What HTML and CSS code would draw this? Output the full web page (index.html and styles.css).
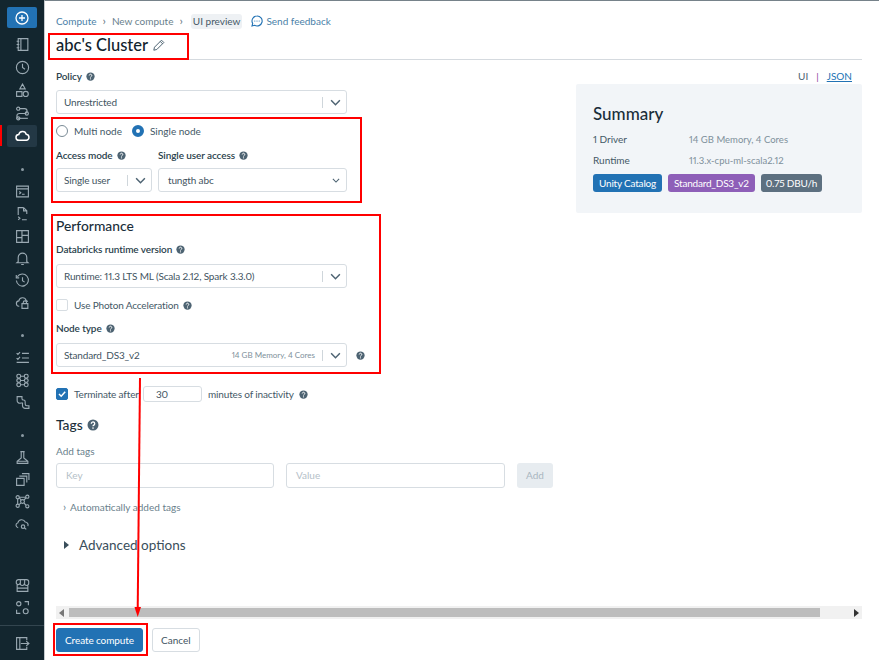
FILE: index.html
```html
<!DOCTYPE html>
<html lang="en">
<head>
<meta charset="utf-8">
<title>abc's Cluster</title>
<link rel="stylesheet" href="styles.css">
</head>
<body>
<svg class="defs" width="0" height="0" aria-hidden="true">
  <symbol id="help" viewBox="0 0 12 12"><circle cx="6" cy="6" r="5.5" fill="#4d6372"/><path d="M4.3 4.7a1.7 1.7 0 1 1 2.6 1.4c-.6.4-.9.6-.9 1.2" fill="none" stroke="#fff" stroke-width="1.3"/><circle cx="6" cy="9.1" r=".8" fill="#fff"/></symbol>
  <symbol id="chev" viewBox="0 0 12 8"><path d="M1 1.5l5 5 5-5" fill="none" stroke="#4d6372" stroke-width="1.7"/></symbol>
</svg>
<div class="app">
  <nav class="rail">
    <div class="rail-top">
      <div class="new-btn"><svg width="14" height="14" viewBox="0 0 14 14" fill="none" stroke="#fff" stroke-width="1.3"><circle cx="7" cy="7" r="6"/><path d="M7 4v6M4 7h6"/></svg></div>
      <div class="rail-item"><svg class="ri" viewBox="0 0 14 14"><path d="M3 1.5h9v11H3zM5.5 1.5v11M1.5 4h2.5M1.5 7h2.5M1.5 10h2.5"/></svg></div>
      <div class="rail-item"><svg class="ri" viewBox="0 0 14 14"><circle cx="7" cy="7" r="5.7"/><path d="M7 3.5V7l2.3 1.6"/></svg></div>
      <div class="rail-item"><svg class="ri" viewBox="0 0 14 14"><path d="M7 1L9.5 5.5h-5zM1.5 8h5v4.5h-5z"/><circle cx="10" cy="10.2" r="2.4"/></svg></div>
      <div class="rail-item"><svg class="ri" viewBox="0 0 14 14"><circle cx="3" cy="2.500" r="1.500"/><circle cx="11" cy="7" r="1.500"/><circle cx="3" cy="11.500" r="1.500"/><path d="M4.500 2.500H9a2.200 2.200 0 0 1 0 4.500H4a2.200 2.200 0 0 0 0 4.500h1"/><path d="M4.500 11.500H12"/></svg></div>
      <div class="rail-item active"><svg class="ri" viewBox="0 0 14 14"><path d="M3.8 11.5a2.7 2.7 0 0 1-.3-5.4 3.6 3.6 0 0 1 7-.3 2.9 2.9 0 0 1 .3 5.7z" stroke-width="1.4"/></svg></div>
    </div>
    <div class="rail-group">
      <i class="rail-dot"></i>
      <div class="rail-item"><svg class="ri" viewBox="0 0 14 14"><path d="M1.5 2h11v10h-11zM1.5 4.5h11M4 7l1.4 1.2L4 9.4M6.5 9.6H9"/></svg></div>
      <div class="rail-item"><svg class="ri" viewBox="0 0 14 14"><path d="M8 1.5H3v7M8 1.5l3 3v3M8 1.5v3h3M3 10l1.6 1.4L3 12.8M6.5 12.8H11"/></svg></div>
      <div class="rail-item"><svg class="ri" viewBox="0 0 14 14"><path d="M1.5 1.5h11v11h-11zM6.5 1.5v11M6.5 6h6M1.5 8h5"/></svg></div>
      <div class="rail-item"><svg class="ri" viewBox="0 0 14 14"><path d="M3 10V6a4 4 0 0 1 8 0v4l1.2 1H1.8zM5.8 12.6h2.4"/></svg></div>
      <div class="rail-item"><svg class="ri" viewBox="0 0 14 14"><path d="M2.2 3.5a5.6 5.6 0 1 1-.9 3.5M1.2 1.8v2.7h2.7M7 4v3.2l2 1.3"/></svg></div>
      <div class="rail-item"><svg class="ri" viewBox="0 0 14 14"><path d="M4 10.5a2.5 2.5 0 0 1-.4-5 3.5 3.5 0 0 1 6.8-.4 2.5 2.5 0 0 1 1.4 1.2M6.5 8h5.5v4.5H6.5zM7.7 8V7a1.5 1.5 0 0 1 3 0v1"/></svg></div>
    </div>
    <div class="rail-group">
      <i class="rail-dot"></i>
      <div class="rail-item"><svg class="ri" viewBox="0 0 14 14"><path d="M1.5 3l1.200 1.200L4.700 2M6.500 3.200H13M1.500 7.500l1.200 1.200 2-2.200M6.500 7.500H13M1.500 11.500H13"/></svg></div>
      <div class="rail-item"><svg class="ri" viewBox="0 0 14 14"><circle cx="3.500" cy="3" r="1.800"/><circle cx="3.500" cy="7" r="1.800"/><circle cx="3.500" cy="11" r="1.800"/><circle cx="10.500" cy="3" r="1.800"/><circle cx="10.500" cy="7" r="1.800"/><circle cx="10.500" cy="11" r="1.800"/><path d="M5.300 3h3.400M5.300 7h3.400M5.300 11h3.400"/></svg></div>
      <div class="rail-item"><svg class="ri" viewBox="0 0 14 14"><path d="M2 1.500h4.500v1.700a1.500 1.500 0 0 0 1.500 1.500 1.500 1.500 0 0 1 1.500 1.500v2.300a1.500 1.500 0 0 0 1.500 1.500H13v2.500H9.500a2.500 2.500 0 0 1-2.500-2.500V7.500H5.500A2.500 2.500 0 0 1 2 5z"/></svg></div>
    </div>
    <div class="rail-group">
      <i class="rail-dot"></i>
      <div class="rail-item"><svg class="ri" viewBox="0 0 14 14"><path d="M5 1.500h4M5.800 1.500v6L2 10.500v2h10v-2L8.200 7.500v-6M2.500 10.500h9"/></svg></div>
      <div class="rail-item"><svg class="ri" viewBox="0 0 14 14"><path d="M1.500 6h7v6.500h-7zM4 3.800h7v6M6.500 1.500h6.500v6"/></svg></div>
      <div class="rail-item"><svg class="ri" viewBox="0 0 14 14"><circle cx="2.500" cy="3" r="1.500"/><circle cx="11.500" cy="2.500" r="1.500"/><circle cx="7" cy="7" r="1.800"/><circle cx="2.500" cy="11" r="1.500"/><circle cx="11.500" cy="11.500" r="1.500"/><path d="M4 3.500l1.800 2.200M10.300 3.500L8.300 5.700M3.800 10l1.900-1.800M10.300 10.500L8.300 8.300M4 3h6M2.500 4.500v5"/></svg></div>
      <div class="rail-item"><svg class="ri" viewBox="0 0 14 14"><path d="M3 10a2.400 2.400 0 0 1-.3-4.700 3.600 3.600 0 0 1 6.800-.6 2.700 2.700 0 0 1 2.500 3.800"/><circle cx="7.500" cy="9" r="1.600"/><path d="M8.800 10l1.700 1.500"/></svg></div>
    </div>
    <div class="rail-bottom">
      <div class="rail-item"><svg class="ri" viewBox="0 0 14 14"><path d="M2 6v6.500h10V6M1.200 5V3.500a2 2 0 0 1 2-2h7.600a2 2 0 0 1 2 2V5a2 2 0 0 1-4 0 2 2 0 0 1-4 0 2 2 0 0 1-3.600 0zM5 1.500V5M9 1.500V5M2 9.500h10"/></svg></div>
      <div class="rail-item"><svg class="ri" viewBox="0 0 14 14"><circle cx="3.500" cy="3.500" r="2"/><circle cx="10" cy="10.500" r="2.300"/><path d="M9 1.500h3.500V5M1.500 9v3.500H5"/></svg></div>
      <div class="rail-foot"><svg class="ri" viewBox="0 0 14 14"><path d="M11 4V1.500H1.500v11H11V10M4.500 1.500v11M5.500 7H13M10.500 4.800L13 7l-2.500 2.200"/></svg></div>
    </div>
  </nav>
  <main class="main">
    <div class="scroller">
      <div class="crumbs">
        <a class="crumb">Compute</a><span class="sep">›</span><span class="crumb muted">New compute</span><span class="sep">›</span>
        <span class="preview">UI preview</span>
        <svg class="fb-icon" width="12" height="12" viewBox="0 0 12 12"><path d="M6 1a5 5 0 0 0-4.300 7.500L1 11l2.600-.7A5 5 0 1 0 6 1z" fill="none" stroke="#2272b4" stroke-width="1.100"/><circle cx="3.800" cy="6" r=".6" fill="#2272b4"/><circle cx="6" cy="6" r=".6" fill="#2272b4"/><circle cx="8.200" cy="6" r=".6" fill="#2272b4"/></svg>
        <a class="crumb">Send feedback</a>
      </div>
      <div class="title-row">
        <h1 class="title">abc's Cluster</h1>
        <svg class="pencil" width="12" height="12" viewBox="0 0 12 12"><path d="M8.500 1.200l2.300 2.300-7 7-3 .7.700-3zM7.300 2.500l2.300 2.300" fill="none" stroke="#4d6372" stroke-width="1"/></svg>
      </div>
      <div class="columns">
        <div class="form">
          <div class="label lab-policy">Policy <svg class="help"><use href="#help"/></svg></div>
          <div class="select wide"><span>Unrestricted</span><span class="select-end"><i class="bar"></i><svg class="chev"><use href="#chev"/></svg></span></div>

          <div class="radios">
            <span class="radio"><i class="dot"></i>Multi node</span>
            <span class="radio"><i class="dot on"></i>Single node</span>
          </div>
          <div class="pair">
            <div class="pair-a">
              <div class="label">Access mode <svg class="help"><use href="#help"/></svg></div>
              <div class="select"><span>Single user</span><span class="select-end"><i class="bar"></i><svg class="chev"><use href="#chev"/></svg></span></div>
            </div>
            <div class="pair-b">
              <div class="label">Single user access <svg class="help"><use href="#help"/></svg></div>
              <div class="select plain"><span>tungth abc</span><svg class="chev small"><use href="#chev"/></svg></div>
            </div>
          </div>

          <h2 class="section perf">Performance</h2>
          <div class="label lab-runtime">Databricks runtime version <svg class="help"><use href="#help"/></svg></div>
          <div class="select wide"><span>Runtime: 11.3 LTS ML (Scala 2.12, Spark 3.3.0)</span><span class="select-end"><i class="bar"></i><svg class="chev"><use href="#chev"/></svg></span></div>
          <div class="check-row photon"><i class="check"></i>Use Photon Acceleration <svg class="help"><use href="#help"/></svg></div>
          <div class="label lab-node">Node type <svg class="help"><use href="#help"/></svg></div>
          <div class="node-row">
            <div class="select wide"><span>Standard_DS3_v2</span><span class="select-end"><span class="hint">14 GB Memory, 4 Cores</span><i class="bar"></i><svg class="chev"><use href="#chev"/></svg></span></div>
            <svg class="help"><use href="#help"/></svg>
          </div>
          <div class="check-row term">
            <i class="check on"><svg width="10" height="10" viewBox="0 0 10 10"><path d="M2 5l2.200 2.200L8.200 2.800" fill="none" stroke="#fff" stroke-width="1.500"/></svg></i>
            <span class="term-a">Terminate after</span>
            <span class="num">30</span>
            <span>minutes of inactivity</span>
            <svg class="help"><use href="#help"/></svg>
          </div>
          <h2 class="section tags">Tags <svg class="help big"><use href="#help"/></svg></h2>
          <div class="add-tags">Add tags</div>
          <div class="tag-row">
            <div class="field key">Key</div>
            <div class="field">Value</div>
            <div class="add-btn">Add</div>
          </div>
          <div class="auto-tags"><span class="gt">›</span>Automatically added tags</div>
          <div class="advanced"><i class="tri"></i>Advanced options</div>
        </div>
        <aside class="side">
          <div class="tabs"><span>UI</span><span class="pipe">|</span><a>JSON</a></div>
          <div class="summary">
            <h2 class="sum-title">Summary</h2>
            <div class="sum-row"><span class="sum-k">1 Driver</span><span class="sum-v">14 GB Memory, 4 Cores</span></div>
            <div class="sum-row"><span class="sum-k">Runtime</span><span class="sum-v">11.3.x-cpu-ml-scala2.12</span></div>
            <div class="badges"><span class="badge blue">Unity Catalog</span><span class="badge purple">Standard_DS3_v2</span><span class="badge slate">0.75 DBU/h</span></div>
          </div>
        </aside>
      </div>
    </div>
    <div class="hscroll"><svg class="arr" width="6" height="8" viewBox="0 0 6 8"><path d="M5 0v8L0 4z" fill="#777"/></svg><div class="thumb"></div><svg class="arr" width="6" height="8" viewBox="0 0 6 8"><path d="M1 0v8l5-4z" fill="#333"/></svg></div>
    <div class="footer"><button class="btn primary">Create compute</button><button class="btn">Cancel</button></div>
  </main>
</div>
<div class="mark m-rail"></div>
<div class="mark m-title"></div>
<div class="mark m-mode"></div>
<div class="mark m-perf"></div>
<div class="mark m-create"></div>
<svg class="arrow" width="20" height="250" viewBox="0 0 20 250"><path d="M11 0L8.700 232" stroke="#f00" stroke-width="2" fill="none"/><path d="M5.500 229L12 229 8.700 239z" fill="#f00"/></svg>
</body>
</html>
```
FILE: styles.css
```css
* { box-sizing: border-box; }
html, body { margin: 0; height: 100%; }
body {
  font-family: "Lato", "Noto Sans", sans-serif;
  font-size: 10px;
  font-variant-numeric: proportional-nums;
  color: #1f3542;
  background: #fff;
  overflow: hidden;
}
.defs { position: absolute; }
.app { display: flex; width: 879px; height: 660px; }

.rail {
  width: 44px;
  flex: none;
  background: #13262f;
  display: flex;
  flex-direction: column;
  align-items: center;
  padding-top: 7px;
}
.rail-top, .rail-group, .rail-bottom { display: flex; flex-direction: column; align-items: center; width: 100%; }
.new-btn {
  width: 30px; height: 21px;
  background: #2272b4;
  border-radius: 2px;
  display: flex; align-items: center; justify-content: center;
  margin-bottom: 5.600px;
}
.rail-item { width: 30px; height: 22.100px; flex: none; display: flex; align-items: center; justify-content: center; border-radius: 2px; }
.rail-top .rail-item { height: 22.750px; }
.rail-item.active { background: #233845; }
.ri { width: 15px; height: 15px; fill: none; stroke: #9aa9b2; stroke-width: 1.050; }
.rail-item.active .ri { stroke: #fff; }
.rail-dot { display: block; width: 3px; height: 3px; border-radius: 50%; background: #8b9aa3; margin-bottom: 9.500px; }
.rail-group { margin-top: 21px; }
.rail-bottom { margin-top: auto; }
.rail-foot {
  width: 100%; height: 35px; margin-top: 6px;
  border-top: 1px solid #33454f;
  display: flex; align-items: center; justify-content: center;
}

.main {
  flex: 1; min-width: 0;
  display: flex; flex-direction: column;
  border-top: 1px solid #76828a;
  border-left: 1px solid #c5cbcf;
}
.scroller { flex: 1; min-height: 0; padding: 0 17px 0 11px; }

.crumbs { display: flex; align-items: center; height: 18px; margin-top: 11px; }
.crumb { color: #4a7fa8; }
.crumb.muted { color: #6a7f8c; }
.sep { color: #5f7482; margin: 0 6px; font-size: 12px; line-height: 1; }
.preview { background: #eef1f4; color: #445866; padding: 1px 2px; border-radius: 3px; margin: 0 9px 0 2px; line-height: 13px; }
.fb-icon { margin-right: 3px; }

.title-row {
  display: flex; align-items: center;
  height: 30px;
  border-bottom: 1px solid #d5dadf;
}
.title { margin: 0; font-size: 16.500px; font-weight: 500; color: #11232d; line-height: 26px; }
.pencil { margin-left: 5px; }

.columns { display: flex; }
.form { width: 498px; flex: none; }
.side { width: 286px; margin-left: 22px; flex: none; }

.label { font-weight: 600; letter-spacing: -.1px; color: #2a3f4c; display: flex; align-items: center; gap: 4px; line-height: 14px; white-space: nowrap; }
.help { width: 9px; height: 9px; flex: none; }
.help.big { width: 12px; height: 12px; }
.lab-policy { margin-top: 9px; margin-bottom: 7px; }

.select {
  height: 24px;
  border: 1px solid #d7dde2;
  border-radius: 3px;
  display: flex; align-items: center; justify-content: space-between;
  padding-left: 7px;
  color: #3f5461;
  letter-spacing: -.15px;
  white-space: nowrap;
}
.select.wide { width: 291px; }
.select.plain { padding-right: 6px; padding-left: 9px; }
.select-end { display: flex; align-items: center; }
.bar { display: block; width: 1px; height: 11px; background: #cfd6db; }
.chev { width: 11px; height: 7px; margin: 0 5px 0 7px; }
.chev.small { width: 8px; height: 5px; margin: 0; }
.hint { font-size: 8px; letter-spacing: 0; color: #7e909b; margin-right: 7px; }

.radios { display: flex; gap: 10px; height: 16px; margin-top: 9px; align-items: center; }
.radio { display: flex; align-items: center; gap: 6px; color: #445866; }
.dot { display: block; width: 12px; height: 12px; border-radius: 50%; border: 1px solid #7a8b96; background: #fff; }
.dot.on { border: 4px solid #2272b4; }
.pair { display: flex; gap: 6px; width: 291px; margin-top: 9px; }
.pair-a { width: 96px; }
.pair-b { flex: 1; }
.pair .label { margin-bottom: 6px; }

.section { margin: 0; font-size: 13.800px; font-weight: 500; color: #1a2e3a; line-height: 18px; }
.perf { margin-top: 25px; }
.lab-runtime { margin-top: 7px; margin-bottom: 8px; }
.check-row { display: flex; align-items: center; color: #445866; letter-spacing: -.15px; white-space: nowrap; }
.photon { margin-top: 9px; height: 16px; }
.photon .help { margin-left: 4px; }
.check { display: flex; align-items: center; justify-content: center; width: 12px; height: 12px; border: 1px solid #d7dde2; border-radius: 2px; margin-right: 6px; flex: none; }
.check.on { background: #2272b4; border-color: #2272b4; }
.lab-node { margin-top: 8px; margin-bottom: 8px; }
.node-row { display: flex; align-items: center; gap: 9px; }
.term { margin-top: 19px; height: 16px; }
.term-a { width: 69px; }
.num { width: 59px; height: 16px; border: 1px solid #d7dde2; border-radius: 3px; padding-left: 12px; line-height: 14px; margin-right: 6px; color: #3f5461; }
.term .help { margin-left: 5px; }
.tags { margin-top: 14px; display: flex; align-items: center; gap: 4px; }
.add-tags { margin-top: 10px; color: #6a7f8c; line-height: 14px; }
.tag-row { display: flex; margin-top: 5px; gap: 12px; }
.field { height: 25px; width: 219px; border: 1px solid #d7dde2; border-radius: 3px; padding-left: 9px; line-height: 23px; color: #b4c0c8; }
.field.key { width: 218px; }
.add-btn { width: 36px; height: 25px; background: #e7ecf0; border-radius: 3px; color: #a9b6c0; text-align: center; line-height: 25px; }
.auto-tags { margin-top: 12px; margin-left: 7px; color: #6a7f8c; line-height: 14px; }
.gt { margin-right: 4px; font-size: 11px; }
.advanced { display: flex; align-items: center; margin-top: 22px; margin-left: 8px; font-size: 13.500px; color: #3a4e5b; line-height: 18px; }
.tri { display: block; width: 0; height: 0; border-left: 5px solid #3a4e5b; border-top: 4.500px solid transparent; border-bottom: 4.500px solid transparent; margin-right: 10px; }

.tabs { display: flex; justify-content: flex-end; gap: 8px; height: 24px; padding: 9px 10px 0 0; line-height: 14px; color: #4d6372; }
.tabs a { color: #2272b4; text-decoration: underline; }
.pipe { color: #8e3f9e; }
.summary { height: 129px; background: #f2f5f8; padding: 19px 17px 0; border-radius: 2px; }
.sum-title { margin: 0 0 4px; font-size: 17px; font-weight: 500; color: #1a2e3a; line-height: 22px; }
.sum-row { display: flex; height: 21px; line-height: 21px; color: #445866; }
.sum-k { width: 96px; }
.sum-v { color: #7e909b; font-size: 9.500px; }
.badges { display: flex; gap: 6px; margin-top: 3px; }
.badge { height: 18px; line-height: 18px; padding: 0 6px; border-radius: 3px; color: #fff; letter-spacing: -.2px; white-space: nowrap; }
.blue { background: #2272b4; }
.purple { background: #8e5fb8; }
.slate { background: #5d7080; padding: 0 5px; }

.hscroll {
  display: flex; align-items: center;
  height: 13px; margin: 0 17px 0 11px; flex: none;
  background: #f1f1f1;
  padding: 0 3px;
}
.thumb { width: 751px; height: 9px; background: #bdbdbd; margin: 0 auto 0 4px; }
.footer { display: flex; gap: 9px; padding: 9px 0 7px 11px; flex: none; align-items: flex-start; height: 41px; }
.btn {
  font: inherit; height: 24px; padding: 0 8px;
  background: #fff; color: #3f5461;
  border: 1px solid #d7dde2; border-radius: 3px;
}
.btn.primary { background: #2272b4; border-color: #2272b4; color: #fff; width: 87px; padding: 0; letter-spacing: -.1px; }

.mark { position: absolute; border: 2px solid #f00; pointer-events: none; }
.m-rail { left: 0; top: 125px; width: 2px; height: 21px; border-width: 0 0 0 2px; }
.m-title { left: 48px; top: 33px; width: 141px; height: 27px; }
.m-mode { left: 51px; top: 117px; width: 311px; height: 86px; }
.m-perf { left: 51px; top: 214px; width: 330px; height: 160px; }
.m-create { left: 53px; top: 623px; width: 95px; height: 33px; }
.arrow { position: absolute; left: 129px; top: 378px; }
```
